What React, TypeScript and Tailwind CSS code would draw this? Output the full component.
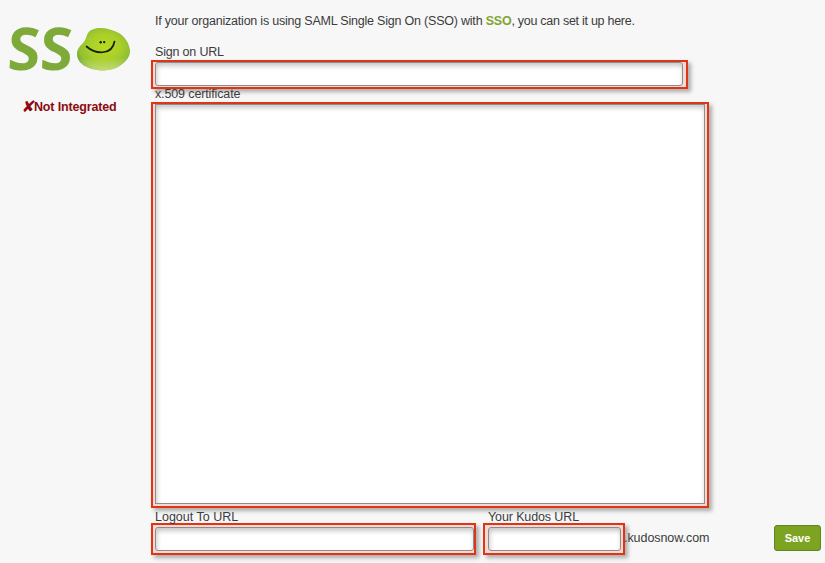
import type { ReactNode } from "react";

function Highlight({ className, children }: { className: string; children: ReactNode }) {
  return (
    <div
      className={`flex shrink-0 border-2 border-[#de3516] bg-[#f8d8d1] shadow-[3px_3px_4px_rgba(0,0,0,0.3)] ${className}`}
    >
      {children}
    </div>
  );
}

const field =
  "block min-w-0 flex-1 resize-none border border-[#8c8c8c] bg-white shadow-[inset_1px_3px_5px_rgba(0,0,0,0.22)] outline-none";

const beanOutline =
  "M11 8C13 3 18 1 24 1C31 1 37 3 43 6C49 10 53 16 54 23C55 31 46 39 37 42C30 44 21 44 13 41C5 38 1 33 1 27C1 22 4 19 7 16C9 14 10 11 11 8Z";

function Bean() {
  return (
    <svg className="ml-[2px] mt-[20px] h-[46px] w-[56px] shrink-0" viewBox="0 0 56 46">
      <defs>
        <radialGradient id="bean" cx="0.52" cy="0.45" r="0.6">
          <stop offset="0" stopColor="#b9d920" />
          <stop offset="0.5" stopColor="#a9cf2a" />
          <stop offset="0.8" stopColor="#92bf33" />
          <stop offset="1" stopColor="#6a9b3c" />
        </radialGradient>
        <linearGradient id="shine" x1="0" y1="0" x2="0" y2="1">
          <stop offset="0.7" stopColor="#d9ec85" stopOpacity="0" />
          <stop offset="1" stopColor="#d9ec85" stopOpacity="0.75" />
        </linearGradient>
      </defs>
      <path d={beanOutline} fill="url(#bean)" />
      <path d={beanOutline} fill="url(#shine)" />
      <path d="M10.5 19.5C19 27 36 29 38.5 14.5" fill="none" stroke="#162006" strokeWidth="1.7" strokeLinecap="round" />
      <circle cx="24.7" cy="15.2" r="1.2" fill="#162006" />
      <circle cx="28.2" cy="15.1" r="1.2" fill="#162006" />
    </svg>
  );
}

export default function App() {
  return (
    <div className="flex h-[563px] w-[825px] overflow-hidden bg-[#f7f7f7] font-['Liberation_Sans',Arial,sans-serif] text-[12.5px] leading-[16px] text-[#3b3b3b]">
      <aside className="w-[151px] shrink-0 pl-2 pt-[7px]">
        <div className="flex h-[80px]">
          <span className="h-[80px] w-[66px] shrink-0 -skew-x-3 whitespace-nowrap font-['Open_Sans',sans-serif] text-[59px] font-bold leading-[80px] text-[#7eaa3a]">
            SS
          </span>
          <Bean />
        </div>
        <div className="mt-[12px] flex pl-[14px] font-bold text-[#8d0b10]">
          <span className="w-[12px] shrink-0 -skew-x-6 font-['DejaVu_Sans',sans-serif] text-[16px]">✘</span>
          <span className="whitespace-nowrap tracking-[-0.16px]">Not Integrated</span>
        </div>
      </aside>
      <main className="flex w-[674px] shrink-0 flex-col">
        <p className="mt-[13px] whitespace-nowrap pl-1 tracking-[-0.21px]">
          If your organization is using SAML Single Sign On (SSO) with{" "}
          <strong className="text-[#7fa536]">SSO</strong>
          <span className="tracking-[-0.27px]">, you can set it up here.</span>
        </p>
        <label className="mt-[15px] h-4 pl-1 tracking-[-0.18px]">Sign on URL</label>
        <Highlight className="h-[29px] w-[537px] pb-px pl-[2px] pr-[3px]">
          <input aria-label="Sign on URL" className={`${field} rounded-[3px]`} />
        </Highlight>
        <label className="relative h-[13px] pl-1 leading-[10px] tracking-[-0.13px]">x.509 certificate</label>
        <Highlight className="h-[406px] w-[558px] pb-[2px] pl-[2px] pr-[2px]">
          <textarea aria-label="x.509 certificate" className={field} />
        </Highlight>
        <div className="relative flex h-[15px] pl-1 leading-[19px]">
          <label className="w-[333px]">Logout To URL</label>
          <label className="tracking-[-0.12px]">Your Kudos URL</label>
        </div>
        <div className="flex h-8">
          <Highlight className="w-[325px] py-[2px] pl-[2px] pr-0">
            <input aria-label="Logout To URL" className={`${field} rounded-[3px]`} />
          </Highlight>
          <Highlight className="ml-[7px] w-[142px] py-[2px] pl-[3px] pr-[2px]">
            <input aria-label="Your Kudos URL" className={`${field} rounded-[3px]`} />
          </Highlight>
          <span className="relative -ml-px w-[150px] leading-[31px] tracking-[-0.06px]">.kudosnow.com</span>
          <button className="mt-[2px] h-[26px] w-[47px] shrink-0 rounded-[3px] border border-[#5f8420] bg-[#7da421] text-[11px] font-bold text-white">
            Save
          </button>
        </div>
      </main>
    </div>
  );
}
